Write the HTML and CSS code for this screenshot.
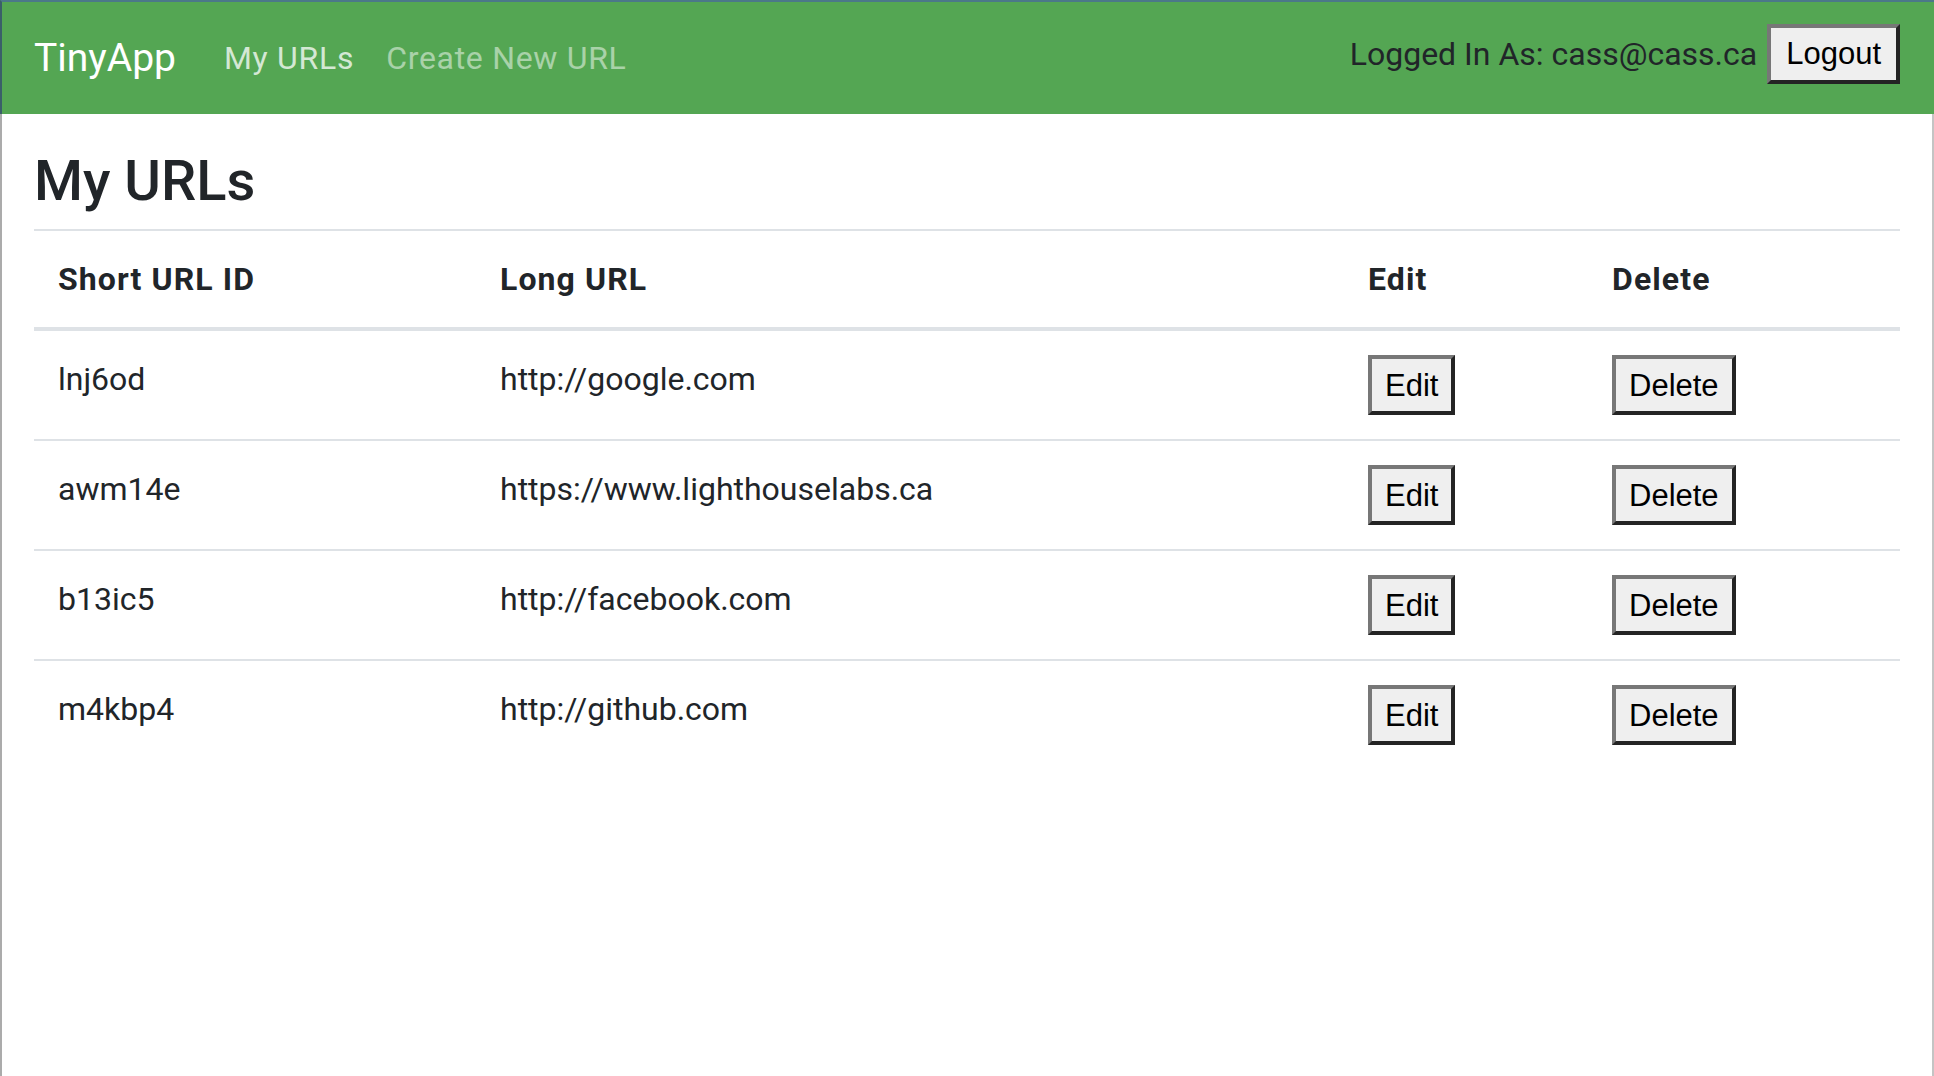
FILE: index.html
```html
<!DOCTYPE html>
<html lang="en">
<head>
<meta charset="utf-8">
<title>TinyApp</title>
<link rel="stylesheet" href="styles.css">
</head>
<body>
<div class="page">
  <nav class="navbar">
    <a class="brand" href="#">TinyApp</a>
    <ul class="nav">
      <li><a class="nav-link nav-link-active" href="#">My URLs</a></li>
      <li><a class="nav-link" href="#">Create New URL</a></li>
    </ul>
    <form class="user-box">
      <span class="user-text">Logged In As: cass@cass.ca</span>
      <button type="button" class="btn btn-logout">Logout</button>
    </form>
  </nav>
  <main class="main">
    <h3 class="title">My URLs</h3>
    <table class="table">
      <colgroup>
        <col class="col-short">
        <col class="col-long">
        <col class="col-edit">
        <col class="col-delete">
      </colgroup>
      <thead>
        <tr>
          <th>Short URL ID</th>
          <th>Long URL</th>
          <th>Edit</th>
          <th>Delete</th>
        </tr>
      </thead>
      <tbody>
        <tr>
          <td>lnj6od</td>
          <td>http://google.com</td>
          <td><button type="button" class="btn">Edit</button></td>
          <td><button type="button" class="btn">Delete</button></td>
        </tr>
        <tr>
          <td>awm14e</td>
          <td>https://www.lighthouselabs.ca</td>
          <td><button type="button" class="btn">Edit</button></td>
          <td><button type="button" class="btn">Delete</button></td>
        </tr>
        <tr>
          <td>b13ic5</td>
          <td>http://facebook.com</td>
          <td><button type="button" class="btn">Edit</button></td>
          <td><button type="button" class="btn">Delete</button></td>
        </tr>
        <tr>
          <td>m4kbp4</td>
          <td>http://github.com</td>
          <td><button type="button" class="btn">Edit</button></td>
          <td><button type="button" class="btn">Delete</button></td>
        </tr>
      </tbody>
    </table>
  </main>
</div>
</body>
</html>
```
FILE: styles.css
```css
* {
  box-sizing: border-box;
}

html, body {
  margin: 0;
  padding: 0;
  height: 100%;
}

body {
  font-family: Roboto, "Liberation Sans", sans-serif;
  font-size: 32px;
  line-height: 1.5;
  color: #212529;
  background: #ffffff;
}

.page {
  min-height: 100vh;
  display: flex;
  flex-direction: column;
}

.navbar {
  display: flex;
  align-items: center;
  background: #54a653;
  border-top: 2px solid #4b7889;
  border-left: 2px solid #3a5f69;
  padding: 16px 34px 16px 32px;
}

.brand {
  font-size: 39px;
  line-height: 60px;
  padding: 10px 0;
  margin-right: 32px;
  color: #ffffff;
  text-decoration: none;
  white-space: nowrap;
}

.nav {
  display: flex;
  list-style: none;
  margin: 0;
  padding: 0;
}

.nav-link {
  display: block;
  padding: 16px;
  line-height: 48px;
  letter-spacing: 0.7px;
  color: rgba(255, 255, 255, 0.5);
  text-decoration: none;
}

.nav-link-active {
  color: rgba(255, 255, 255, 0.75);
}

.user-box {
  margin: 6px 0 0 auto;
  align-self: flex-start;
  display: flex;
  align-items: center;
  gap: 10px;
}

.user-text {
  color: #212529;
  white-space: nowrap;
}

.btn {
  font-family: "Liberation Sans", Arial, sans-serif;
  font-size: 31px;
  line-height: normal;
  color: #000000;
  background: #efefef;
  border-style: solid;
  border-width: 4px;
  border-color: #777777 #242424 #242424 #777777;
  padding: 9px 13px 7px 13px;
  margin: 0;
  border-radius: 0;
}

.btn-logout {
  padding: 8px 15px;
}

.main {
  flex: 1;
  border-left: 2px solid #ababab;
  border-right: 2px solid #c4c4c4;
  padding: 34px 32px 0 32px;
}

.title {
  margin: 0 0 14px 0;
  font-size: 56px;
  font-weight: 500;
  line-height: 1.2;
}

.table {
  width: 100%;
  table-layout: fixed;
  border-collapse: separate;
  border-spacing: 0;
}

.col-short { width: 442px; }
.col-long { width: 868px; }
.col-edit { width: 244px; }
.col-delete { width: 312px; }

.table th,
.table td {
  padding: 24px;
  text-align: left;
  vertical-align: top;
  border-top: 2px solid #dee2e6;
}

.table th {
  font-weight: 700;
  letter-spacing: 1.1px;
  border-bottom: 4px solid #dee2e6;
  white-space: nowrap;
}

.table tbody tr:first-child td {
  border-top: 0;
}

.table tbody tr:last-child td {
  border-bottom: 0;
}
```
